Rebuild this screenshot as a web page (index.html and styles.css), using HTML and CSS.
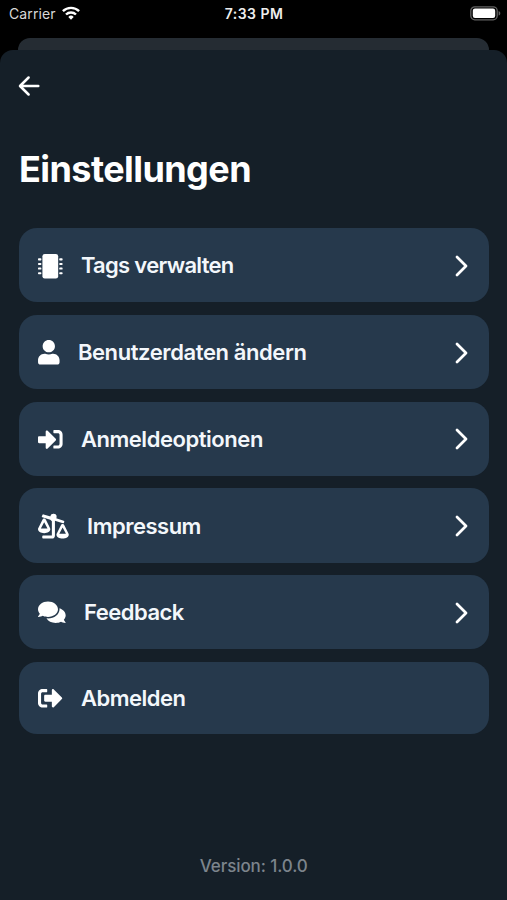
FILE: index.html
```html
<!DOCTYPE html>
<html lang="de">
<head>
<meta charset="utf-8">
<title>Einstellungen</title>
<link rel="stylesheet" href="styles.css">
</head>
<body>
<header class="status">
  <div class="carrier"><span>Carrier</span>
    <svg class="wifi" viewBox="0 0 18 14"><g fill="none" stroke="#fff" stroke-width="2.4"><path d="M.9 5.2a11.6 11.6 0 0 1 16.2 0"/><path d="M4 8.5a7.1 7.1 0 0 1 10 0"/></g><path fill="#fff" d="M9 13.8l-2.7-2.9a3.9 3.9 0 0 1 5.4 0z"/></svg>
  </div>
  <time class="clock">7:33 PM</time>
  <svg class="battery" viewBox="0 0 31 15"><rect x=".8" y=".8" width="26.4" height="13" rx="4" fill="none" stroke="#626262" stroke-width="1.3"/><rect x="2.8" y="2.6" width="22.4" height="9.4" rx="2.2" fill="#fff"/><path d="M28.6 5c2.3.8 2.3 3.8 0 4.6z" fill="#626262"/></svg>
</header>
<div class="behind"></div>
<main class="sheet">
  <svg class="back" viewBox="0 0 22 20"><path d="M10.6 1.5L2 10l8.6 8.5M2.5 10h17.8" fill="none" stroke="#fff" stroke-width="2.5" stroke-linecap="round" stroke-linejoin="round"/></svg>
  <h1 class="title">Einstellungen</h1>
  <nav class="menu">
    <div class="row">
      <svg class="icon" viewBox="0 0 512 512"><rect x="92" width="328" height="512" rx="48"/><g><rect y="91" width="70" height="42" rx="15"/><rect y="187" width="70" height="42" rx="15"/><rect y="283" width="70" height="42" rx="15"/><rect y="379" width="70" height="42" rx="15"/><rect x="442" y="91" width="70" height="42" rx="15"/><rect x="442" y="187" width="70" height="42" rx="15"/><rect x="442" y="283" width="70" height="42" rx="15"/><rect x="442" y="379" width="70" height="42" rx="15"/></g></svg>
      <span class="label tags">Tags verwalten</span>
      <svg class="chevron" viewBox="0 0 14 22"><path d="M2 2l9 9-9 9"/></svg>
    </div>
    <div class="row">
      <svg class="icon user" viewBox="0 0 448 512"><path d="M224 256c70.700 0 128-57.300 128-128S294.700 0 224 0 96 57.300 96 128s57.300 128 128 128zm89.600 32h-16.700c-22.200 10.200-46.900 16-72.900 16s-50.600-5.800-72.900-16h-16.700C60.200 288 0 348.200 0 422.400V464c0 26.500 21.500 48 48 48h352c26.500 0 48-21.500 48-48v-41.600c0-74.200-60.200-134.400-134.400-134.400z"/></svg>
      <span class="label data">Benutzerdaten ändern</span>
      <svg class="chevron" viewBox="0 0 14 22"><path d="M2 2l9 9-9 9"/></svg>
    </div>
    <div class="row">
      <svg class="icon" viewBox="0 0 512 512"><path d="M416 448h-84c-6.600 0-12-5.400-12-12v-40c0-6.600 5.400-12 12-12h84c17.700 0 32-14.300 32-32V160c0-17.700-14.300-32-32-32h-84c-6.600 0-12-5.400-12-12V76c0-6.600 5.400-12 12-12h84c53 0 96 43 96 96v192c0 53-43 96-96 96zm-47-201L201 79c-15-15-41-4.500-41 17v96H24c-13.300 0-24 10.700-24 24v96c0 13.300 10.700 24 24 24h136v96c0 21.500 26 32 41 17l168-168c9.300-9.400 9.300-24.600 0-34z"/></svg>
      <span class="label login">Anmeldeoptionen</span>
      <svg class="chevron" viewBox="0 0 14 22"><path d="M2 2l9 9-9 9"/></svg>
    </div>
    <div class="row">
      <svg class="icon scale" viewBox="0 0 640 512"><path d="M115 8l148 44a64 64 0 0 1 121-20l-6 56 157 52a18 18 0 0 1 12 22l-7 20a18 18 0 0 1-22 11L352 138v310a64 64 0 0 1-64 64H104a16 16 0 0 1-16-16v-32a16 16 0 0 1 16-16h184V151l-33-31L90 68a18 18 0 0 1-11-22l13-27a18 18 0 0 1 23-11z"/><circle cx="320" cy="64" r="63"/><path fill-rule="evenodd" d="M128 96c18 0 27 8 36 26l75 150c12 24 17 28 17 48 0 44-57 80-128 80S0 364 0 320c0-17 4-22 17-48l75-150c9-18 18-26 36-26zm0 74L59 300h138z"/><path fill-rule="evenodd" d="M512 208c18 0 27 8 36 26l75 150c12 24 17 28 17 48 0 44-57 80-128 80s-128-36-128-80c0-17 4-22 17-48l75-150c9-18 18-26 36-26zm0 74l-69 130h138z"/></svg>
      <span class="label imprint">Impressum</span>
      <svg class="chevron" viewBox="0 0 14 22"><path d="M2 2l9 9-9 9"/></svg>
    </div>
    <div class="row">
      <svg class="icon comments" viewBox="0 0 576 512"><path d="M416 192c0-88.400-93.100-160-208-160S0 103.600 0 192c0 34.300 14.100 65.900 38 92-13.400 30.200-35.500 54.200-35.800 54.500-2.200 2.300-2.800 5.700-1.500 8.700S4.800 352 8 352c36.600 0 66.900-12.300 88.700-25 32.200 15.700 70.300 25 111.300 25 114.900 0 208-71.600 208-160zm122 220c23.900-26 38-57.700 38-92 0-66.900-53.500-124.200-129.300-148.100.9 6.600 1.300 13.300 1.300 20.100 0 105.900-107.700 192-240 192-10.800 0-21.300-.8-31.700-1.900C207.800 439.600 281.800 480 368 480c41 0 79.100-9.200 111.300-25 21.800 12.700 52.100 25 88.700 25 3.200 0 6.100-1.900 7.300-4.800 1.300-2.900.7-6.300-1.500-8.700-.3-.3-22.400-24.200-35.800-54.500z"/></svg>
      <span class="label feedback">Feedback</span>
      <svg class="chevron" viewBox="0 0 14 22"><path d="M2 2l9 9-9 9"/></svg>
    </div>
    <div class="row last">
      <svg class="icon" viewBox="0 0 512 512"><path d="M497 273L329 441c-15 15-41 4.500-41-17v-96H152c-13.300 0-24-10.700-24-24v-96c0-13.300 10.700-24 24-24h136V88c0-21.400 25.900-32 41-17l168 168c9.300 9.400 9.300 24.600 0 34zM192 436v-40c0-6.600-5.400-12-12-12H96c-17.700 0-32-14.300-32-32V160c0-17.700 14.300-32 32-32h84c6.600 0 12-5.400 12-12V76c0-6.600-5.400-12-12-12H96c-53 0-96 43-96 96v192c0 53 43 96 96 96h84c6.600 0 12-5.400 12-12z"/></svg>
      <span class="label logout">Abmelden</span>
    </div>
  </nav>
  <footer class="version">Version: 1.0.0</footer>
</main>
</body>
</html>
```
FILE: styles.css
```css
* { box-sizing: border-box; }
body {
  margin: 0;
  height: 900px;
  overflow: hidden;
  display: flex;
  flex-direction: column;
  background: #000;
  color: #fff;
  font-family: Inter, "Liberation Sans", sans-serif;
}
svg { display: block; flex: none; overflow: visible; }
.status {
  height: 38px;
  flex: none;
  padding: 0 6px 0 9px;
  display: grid;
  grid-template-columns: 1fr auto 1fr;
  align-items: start;
}
.carrier {
  display: flex;
  gap: 6px;
  font-size: 14px;
  line-height: 28px;
  letter-spacing: 0.1px;
  color: #d8d8d8;
}
.wifi { width: 18px; height: 14px; margin-top: 6px; }
.clock {
  margin-left: -2px;
  font-size: 14px;
  line-height: 28px;
  font-weight: 600;
  letter-spacing: 0.45px;
  color: #eee;
}
.battery { width: 31px; height: 15px; margin-top: 6px; justify-self: end; }
.behind {
  height: 12px;
  flex: none;
  margin: 0 18px;
  border-radius: 12px 12px 0 0;
  background: #252c33;
}
.sheet {
  flex: 1;
  display: flex;
  flex-direction: column;
  border-radius: 13px 13px 0 0;
  background: #151f28;
  padding: 26px 18.5px 0 19px;
}
.back { width: 22px; height: 20px; margin-left: -1px; }
.title {
  margin: 49px 0 0;
  height: 48px;
  font-size: 36px;
  line-height: 48px;
  font-weight: 700;
  letter-spacing: -0.57px;
}
.menu {
  margin-top: 35.4px;
  display: flex;
  flex-direction: column;
  gap: 12.6px;
}
.row {
  height: 74.1px;
  padding: 0 20px 0 18.5px;
  display: flex;
  align-items: center;
  border-radius: 18px;
  background: #26394c;
}
.last { height: 71.7px; }
.icon { width: 24.6px; height: 24.6px; margin-top: 1px; fill: #fff; }
.user { width: 21.6px; }
.scale { width: 30.8px; }
.comments { width: 27.7px; }
.label {
  margin-left: 18.8px;
  flex: 1;
  font-size: 22px;
  line-height: 30px;
  font-weight: 600;
  white-space: nowrap;
  color: #f3f7fb;
}
.tags { letter-spacing: -0.7px; }
.data { letter-spacing: -0.4px; }
.login { letter-spacing: -0.45px; }
.imprint { letter-spacing: -0.5px; }
.feedback { letter-spacing: -0.5px; }
.logout { letter-spacing: -0.5px; }
.chevron {
  width: 14px;
  height: 22px;
  margin-top: 1px;
  fill: none;
  stroke: #fff;
  stroke-width: 2.8;
  stroke-linecap: round;
  stroke-linejoin: round;
}
.version {
  margin-top: 120.4px;
  text-align: center;
  font-size: 17px;
  line-height: 24px;
  font-weight: 500;
  letter-spacing: -0.1px;
  color: #7c848c;
}
```
